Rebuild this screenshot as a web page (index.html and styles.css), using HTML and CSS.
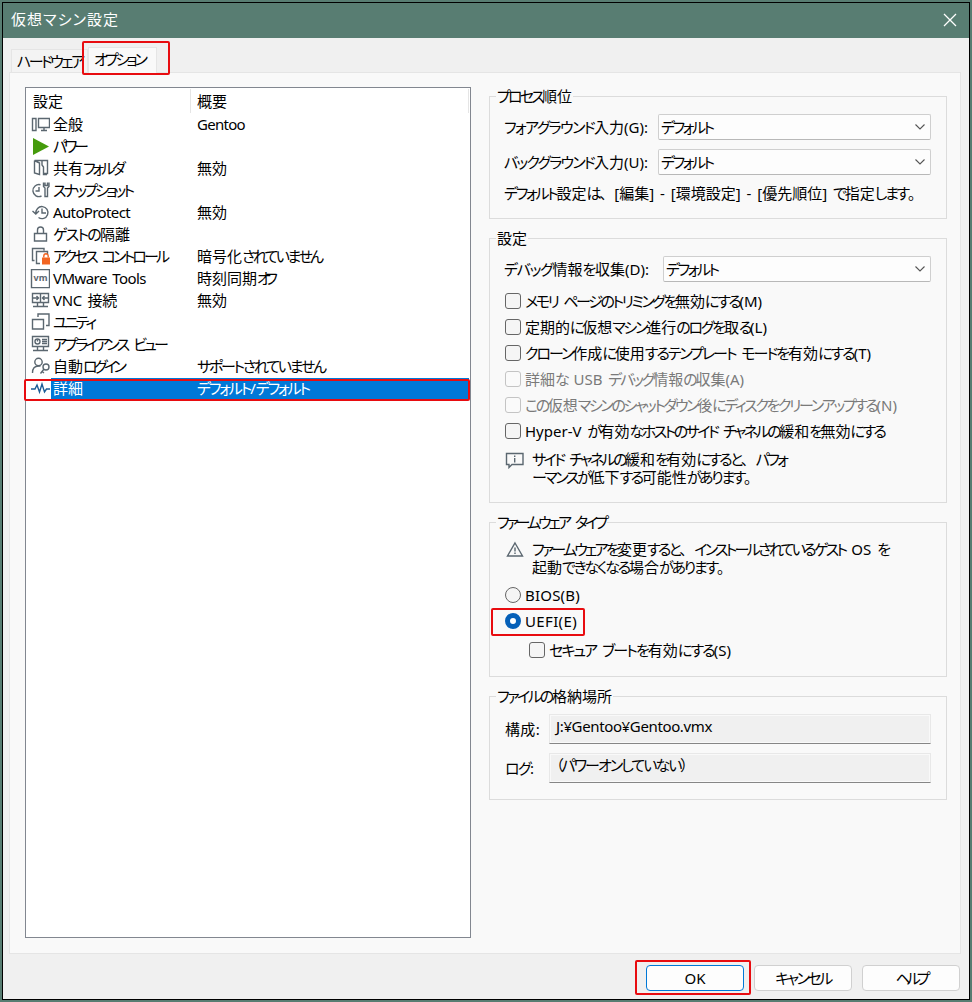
FILE: index.html
```html
<!DOCTYPE html>
<html lang="ja">
<head>
<meta charset="utf-8">
<title>仮想マシン設定</title>
<link rel="stylesheet" href="styles.css">
</head>
<body>
<div class="window">
  <header class="titlebar">
    <span class="title">仮想マシン設定</span>
    <svg class="close" width="14" height="14" viewBox="0 0 14 14"><path d="M1 1L13 13M13 1L1 13"/></svg>
  </header>
  <main class="content">
    <nav class="tabs">
      <div class="tab"><span data-w="67">ハードウェア</span></div>
      <div class="tab active"><span data-w="53">オプション</span></div>
      <div class="mark mark-tab"></div>
    </nav>
    <section class="panel">
      <div class="list">
        <div class="list-head"><div class="col1"><span data-w="29">設定</span></div><div class="col2"><span data-w="29">概要</span></div></div>
        <div class="item"><svg class="icon" viewBox="0 0 20 20"><path d="M2.500 3.500h3.500v12H2.500zM8.500 3.500h11v9h-11zM14 13v2.500M11 15.500h6"/></svg><span class="name" data-w="29">全般</span><span class="val" data-w="47">Gentoo</span></div>
        <div class="item"><svg class="icon" viewBox="0 0 20 20"><path class="play" d="M3 1L19 9.500L3 18z"/></svg><span class="name" data-w="35">パワー</span></div>
        <div class="item"><svg class="icon" viewBox="0 0 20 20"><path d="M4.500 1.500H17.500V14.500H13M4.500 1.500V14L9.500 15.500V4L4.500 1.500M12 1.500V6l1.500 2v7.500H17"/></svg><span class="name" data-w="72">共有フォルダ</span><span class="val" data-w="29">無効</span></div>
        <div class="item"><svg class="icon" viewBox="0 0 20 20"><path d="M10.500 3.800a6 6 0 1 0 1 11.200M9 6v4H5.500M13.500 1.500v4l1.500 1.500v8.500h2.500V7l1.500-1.500v-4M15 1.500v3h2.500v-3"/></svg><span class="name" data-w="81">スナップショット</span></div>
        <div class="item"><svg class="icon" viewBox="0 0 20 20"><path d="M6 10.500A6 6 0 1 1 8.500 14.500M2.500 8l3.300 3L9 8M12 5.500v4.500h4"/></svg><span class="name" data-w="76">AutoProtect</span><span class="val" data-w="29">無効</span></div>
        <div class="item"><svg class="icon" viewBox="0 0 20 20"><path d="M4.500 8.500h12v7.500H4.500zM7.500 8.500V5a3 3 0 0 1 6 0v3.500"/></svg><span class="name" data-w="76">ゲストの隔離</span></div>
        <div class="item"><svg class="icon" viewBox="0 0 20 20"><path d="M4.500 13.500h-2v-12h11.500v2M10 16.500H6.500v-12h11v3.500"/><path class="orange" d="M12 10.500h8v7h-8z"/><path class="orange-line" d="M13.800 10.500V9a2.200 2.200 0 0 1 4.400 0v1.500"/></svg><span class="name" data-w="116">アクセス コントロール</span><span class="val" data-w="126">暗号化されていません</span></div>
        <div class="item"><svg class="icon" viewBox="0 0 20 20"><path d="M1.500 .6h18v18h-18z"/><text x="3.500" y="12">vm</text></svg><span class="name" data-w="92">VMware Tools</span><span class="val" data-w="80">時刻同期オフ</span></div>
        <div class="item"><svg class="icon" viewBox="0 0 20 20"><path d="M2.500 2.500h16v9h-16zM10.500 2.500v9M7.500 12v3M13.500 12v3M3 15.500h15M3 7h5M18 7h-5M6.500 5l2 2L6.500 9M14.500 5l-2 2L14.500 9"/></svg><span class="name" data-w="63">VNC 接続</span><span class="val" data-w="29">無効</span></div>
        <div class="item"><svg class="icon" viewBox="0 0 20 20"><path d="M2.500 6.500h11v9.500h-11zM8 4V1h11v11.500h-3"/></svg><span class="name" data-w="43">ユニティ</span></div>
        <div class="item"><svg class="icon" viewBox="0 0 20 20"><path d="M2.500 1.500h16v10h-16zM7.500 12v3M13.500 12v3M3 15.500h15M12 4.500h5M12 6.500h5M12 8.500h5"/><circle cx="7.500" cy="6.500" r="2.500"/><path d="M7.500 6.500V4.500"/></svg><span class="name" data-w="115">アプライアンス ビュー</span></div>
        <div class="item"><svg class="icon" viewBox="0 0 20 20"><circle cx="8.500" cy="5" r="3.700"/><path d="M2.500 16c0-4 2-7 6-7h2M10.500 16.500l3.500-4.500M12 14.500l2 1.500"/><circle cx="16" cy="10" r="3"/></svg><span class="name" data-w="73">自動ログイン</span><span class="val" data-w="129">サポートされていません</span></div>
        <div class="item selected"><svg class="icon" viewBox="0 0 20 20"><path class="pulse" d="M1 10h4l2-4 2.500 7 2.500-8 2.500 8 2-3H20"/></svg><span class="name" data-w="29">詳細</span><span class="val" data-w="113">デフォルト/デフォルト</span><div class="mark mark-row"></div></div>
      </div>
      <div class="groups">
        <section class="group g1">
          <h2><span data-w="74">プロセス順位</span></h2>
          <div class="row"><span data-w="143">フォアグラウンド入力(G):</span><div class="select w1"><span data-w="53">デフォルト</span><svg width="10" height="6" viewBox="0 0 10 6"><path d="M.5 .5L5 5L9.500 .5"/></svg></div></div>
          <div class="row"><span data-w="143">バックグラウンド入力(U):</span><div class="select w1"><span data-w="53">デフォルト</span><svg width="10" height="6" viewBox="0 0 10 6"><path d="M.5 .5L5 5L9.500 .5"/></svg></div></div>
          <p class="line"><span data-w="418">デフォルト設定は、[編集] - [環境設定] - [優先順位] で指定します。</span></p>
        </section>
        <section class="group g2">
          <h2><span data-w="29">設定</span></h2>
          <div class="row"><span data-w="144">デバッグ情報を収集(D):</span><div class="select w2"><span data-w="53">デフォルト</span><svg width="10" height="6" viewBox="0 0 10 6"><path d="M.5 .5L5 5L9.500 .5"/></svg></div></div>
          <div class="checks">
            <div class="check"><i class="box"></i><span data-w="236">メモリ ページのトリミングを無効にする(M)</span></div>
            <div class="check"><i class="box"></i><span data-w="241">定期的に仮想マシン進行のログを取る(L)</span></div>
            <div class="check"><i class="box"></i><span data-w="345">クローン作成に使用するテンプレート モードを有効にする(T)</span></div>
            <div class="check off"><i class="box"></i><span data-w="218">詳細な USB デバッグ情報の収集(A)</span></div>
            <div class="check off"><i class="box"></i><span data-w="371">この仮想マシンのシャットダウン後にディスクをクリーンアップする(N)</span></div>
            <div class="check"><i class="box"></i><span data-w="361">Hyper-V が有効なホストのサイド チャネルの緩和を無効にする</span></div>
          </div>
          <div class="note"><svg width="20" height="18" viewBox="0 0 20 18"><path d="M2.500 2.500h16.500v11H8l-3 3v-3H2.500z"/><path d="M10.700 4.500v1.500M10.700 7v4.500"/></svg><p><span data-w="256">サイド チャネルの緩和を有効にすると、パフォ</span><br><span data-w="226">ーマンスが低下する可能性があります。</span></p></div>
        </section>
        <section class="group g3">
          <h2><span data-w="111">ファームウェア タイプ</span></h2>
          <div class="note"><svg width="20" height="18" viewBox="0 0 20 18"><path d="M11 2L18.500 15H3.500z"/><path d="M11 6.500v4M11 11.500v1.500"/></svg><p><span data-w="358">ファームウェアを変更すると、インストールされているゲスト OS を</span><br><span data-w="199">起動できなくなる場合があります。</span></p></div>
          <div class="checks">
            <div class="check"><i class="radio"></i><span data-w="54">BIOS(B)</span></div>
            <div class="check"><i class="radio on"></i><span data-w="51">UEFI(E)</span><div class="mark mark-uefi"></div></div>
          </div>
          <div class="check sub"><i class="box"></i><span data-w="181">セキュア ブートを有効にする(S)</span></div>
        </section>
        <section class="group g4">
          <h2><span data-w="114">ファイルの格納場所</span></h2>
          <div class="path"><span data-w="34">構成:</span><div class="field"><span data-w="155">J:¥Gentoo¥Gentoo.vmx</span></div></div>
          <div class="path"><span data-w="28">ログ:</span><div class="field"><span data-w="131">（パワーオンしていない）</span></div></div>
        </section>
      </div>
    </section>
    <footer class="buttons">
      <button class="ok"><span data-w="20">OK</span></button>
      <button><span data-w="57">キャンセル</span></button>
      <button><span data-w="34">ヘルプ</span></button>
      <div class="mark mark-ok"></div>
    </footer>
  </main>
</div>
<script src="labels.js"></script>
</body>
</html>
```

FILE: labels.js
```js
document.querySelectorAll('[data-w]').forEach(function (label) {
  var target = Number(label.dataset.w) + 1;
  label.innerHTML = label.textContent
    .replace(/[ぁ-んァ-ヶー（）]+/g, '<span class="kana">$&</span>')
    .replace(/[、。]/g, '<span class="stop">$&</span>');
  var runs = label.querySelectorAll('.kana');
  var width = label.getBoundingClientRect().width;
  var count = 0;
  runs.forEach(function (run) { count += run.textContent.length; });
  if (runs.length && label.lastChild === runs[runs.length - 1]) count -= 1;
  if (count > 0) {
    runs.forEach(function (run) { run.style.letterSpacing = (target - width) / count + 'px'; });
  } else {
    label.style.letterSpacing = (target - width) / label.textContent.length + 'px';
  }
});
```

FILE: styles.css
```css
* { box-sizing: border-box; margin: 0; padding: 0; }
body {
  width: 972px; height: 1002px; overflow: hidden; background: #587d72; color: #000;
  font: 400 15px/20px "Noto Sans", "Noto Sans CJK JP", sans-serif;
  font-feature-settings: "palt"; white-space: nowrap; display: flow-root; word-spacing: 2px;
}
.window { width: 968px; height: 998px; margin: 2px; border: 1px solid #000; background: #f0f0f0; }
.titlebar {
  display: flex; align-items: center; justify-content: space-between;
  height: 35px; padding: 0 12px 2px 8px; background: #587d72; color: #fff;
}
.title { letter-spacing: 1.05px; margin-top: -2px; }
.stop { font-feature-settings: normal; }
.close { fill: none; stroke: #fff; stroke-width: 1.3; }
.content { padding: 9px 8px 0 6px; }
.tabs { position: relative; display: flex; align-items: flex-end; height: 25px; padding-left: 2px; }
.tab { height: 23px; width: 77px; padding: 1px 0 0 5px; border: 1px solid #e5e5e5; border-bottom: 0; background: #f3f3f3; }
.tab.active { height: 26px; width: 69px; padding-left: 5px; background: #f9f9f9; margin-bottom: -1px; z-index: 1; }
.mark { position: absolute; border: 2px solid #e80c10; border-radius: 2px; z-index: 2; }
.mark-tab { left: 73px; top: -6px; width: 88px; height: 34px; }
.panel { display: flex; gap: 18px; height: 882px; padding: 14px 13px 0 15px; border: 1px solid #e5e5e5; background: #f9f9f9; }
.list { width: 446px; height: 851px; border: 1px solid #828790; background: #fff; }
.list-head { display: flex; height: 26px; padding-top: 1px; }
.list-head div { height: 24px; padding: 2px 0 0 7px; border-right: 1px solid #e5e5e5; }
.list-head .col2 { padding-left: 6px; }
.col1 { width: 165px; }
.col2 { width: 278px; }
.item { position: relative; display: flex; align-items: center; height: 22px; padding-left: 4px; }
.icon { width: 20px; height: 20px; margin-right: 3px; fill: none; stroke: #5b6770; stroke-width: 1.4; flex: none; }
.icon text { font: 700 9px "Noto Sans", sans-serif; fill: #5b6770; stroke: none; }
.icon .play { fill: #459b0c; stroke: none; }
.icon .orange { fill: #f26522; stroke: none; }
.icon .orange-line { stroke: #f26522; }
.icon .pulse { stroke: #1d5d96; }
.name { margin-top: -2px; }
.val { position: absolute; left: 171px; top: 0; }
.selected { color: #fff; background: linear-gradient(90deg, #fff 25px, #0078d7 25px); margin-right: 1px; }
.mark-row { left: -2px; top: 1px; width: 446px; height: 22px; }
.groups { width: 458px; padding-top: 9px; }
.group { border: 1px solid #dcdcdc; padding-left: 14px; }
.g1 { height: 123px; margin-bottom: 19px; }
.g2 { height: 265px; margin-bottom: 19px; }
.g3 { height: 155px; margin-bottom: 19px; }
.g4 { height: 104px; }
h2 { width: max-content; height: 20px; margin: -10px 0 0 -8px; padding: 0 1px; background: #f9f9f9; font: inherit; line-height: 18px; }
.row { display: flex; align-items: center; justify-content: space-between; height: 26px; margin: 7px 15px 9px 0; }
.row + .row { margin-top: 0; }
.line { line-height: 18px; }
.select {
  display: flex; align-items: center; justify-content: space-between; height: 26px; padding: 0 5px 0 2px;
  border: 1px solid #cfcfcf; border-bottom-color: #b8b8b8; border-radius: 2px; background: #fdfdfd;
}
.w1 { width: 273px; }
.w2 { width: 268px; }
.select svg { fill: none; stroke: #555; stroke-width: 1.1; }
.g2 .checks { margin-top: -3px; }
.g3 .checks { margin-top: 5px; }
.check { position: relative; display: flex; align-items: center; height: 26px; gap: 4px; padding-left: 1px; }
.box, .radio { width: 16px; height: 16px; border: 1px solid #666; border-radius: 3px; background: #f5f5f5; }
.radio { border-radius: 50%; }
.radio.on { border: 5px solid #0560b8; background: #fff; }
.off { color: #7a7a7a; }
.off .box { border-color: #c4c4c4; background: #fafafa; }
.sub { margin-top: 3px; padding-left: 25px; }
.mark-uefi { left: -13px; top: 0; width: 94px; height: 28px; }
.note { display: flex; gap: 8px; height: 37px; margin-top: 7px; line-height: 18px; }
.g3 .note { height: 36px; margin-top: 8px; }
.note p { margin-top: -1px; }
.note svg { flex: none; fill: none; stroke: #5b6770; stroke-width: 1.4; }
.path { display: flex; align-items: center; height: 30px; margin: 7px 0 9px 1px; }
.path + .path { margin-top: 0; }
.field {
  width: 382px; height: 30px; margin: 0 15px 0 auto; padding: 1px 0 0 6px;
  background: #f0f0f0; border: 1px solid #e8e8e8; border-bottom-color: #868686; box-shadow: inset 0 0 0 1px #f9f9f9;
}
.buttons { position: relative; display: flex; justify-content: flex-end; gap: 10px; padding: 11px 1px 0 0; }
button {
  width: 98px; height: 26px; border: 1px solid #d0d0d0; border-radius: 4px; background: #fdfdfd;
  font: inherit; font-feature-settings: inherit; color: #000;
}
.ok { border-color: #0078d7; }
.mark-ok { left: 626px; top: 6px; width: 116px; height: 35px; }
```
